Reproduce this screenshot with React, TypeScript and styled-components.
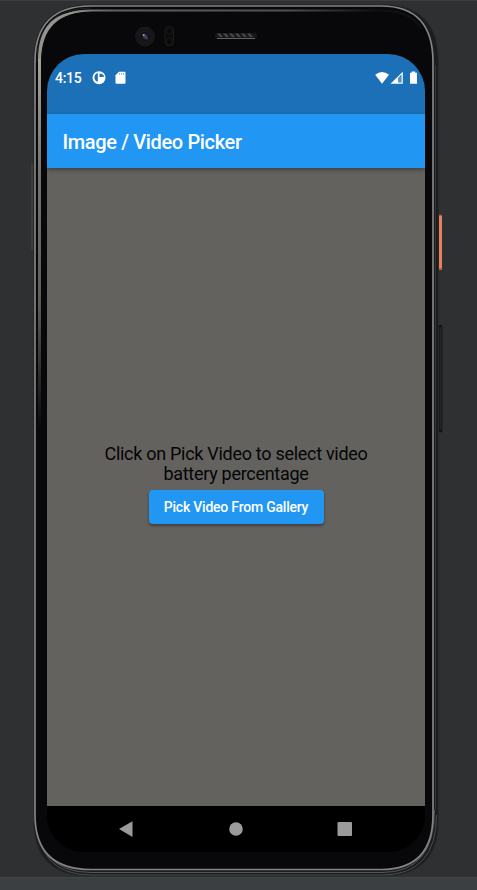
import React from "react";
import styled, { createGlobalStyle } from "styled-components";

const GlobalStyle = createGlobalStyle`
  * { box-sizing: border-box; }
  body { margin: 0; background: #2e3032; font-family: Roboto, "Noto Sans", sans-serif; }
`;

const Desktop = styled.main`
  position: relative;
  width: 477px;
  height: 890px;
  overflow: hidden;
  padding: 54px 52px 0 47px;
  background: linear-gradient(#3a3e41 0 1px, #2e3032 1px 877px, #424548 877px 878px, #3b3f42 878px);
`;

const DeviceArt = styled.svg`
  position: absolute;
  inset: 0;
`;

const Screen = styled.section`
  position: relative;
  display: flex;
  flex-direction: column;
  width: 378px;
  height: 798px;
  overflow: hidden;
  border-radius: 37px;
  background: #000;
`;

const StatusBar = styled.header`
  display: flex;
  justify-content: space-between;
  height: 60px;
  padding: 14px 7px 0 8px;
  background: #1b70b7;
  color: #fff;
`;

const StatusGroup = styled.div<{ $gap: number }>`
  display: flex;
  align-items: center;
  gap: ${(p) => p.$gap}px;
  height: 20px;
`;

const Clock = styled.span`
  width: 28px;
  font-size: 14px;
  font-weight: 500;
  line-height: 22px;
  letter-spacing: -0.3px;
  white-space: nowrap;
`;

const AppBar = styled.div`
  position: relative;
  height: 54px;
  padding-left: 15.5px;
  background: #2196f3;
  box-shadow: 0 2px 4px rgba(0, 0, 0, 0.35);
`;

const Title = styled.h1`
  margin: 0;
  color: #fff;
  font-size: 20px;
  font-weight: 500;
  line-height: 56px;
  letter-spacing: -0.36px;
`;

const Content = styled.div`
  display: flex;
  flex-direction: column;
  align-items: center;
  height: 638px;
  padding-top: 276px;
  background: #63625f;
`;

const Message = styled.p`
  width: 290px;
  margin: 0 0 6px;
  color: #050505;
  font-size: 18px;
  line-height: 20px;
  letter-spacing: -0.29px;
  text-align: center;
`;

const PickButton = styled.button`
  width: 175px;
  height: 34px;
  padding: 0;
  border: 0;
  border-radius: 4px;
  background: #2196f3;
  box-shadow: 0 2px 3px rgba(0, 0, 0, 0.38);
  color: #fff;
  font: 500 14px/34px Roboto, sans-serif;
  letter-spacing: -0.22px;
`;

const NavBar = styled.nav`
  display: flex;
  align-items: center;
  justify-content: space-between;
  height: 46px;
  padding: 0 72px 0 71px;
  background: #000;
`;

const speakerSlots = [217, 223, 229, 235, 241, 247];

function Device() {
  return (
    <DeviceArt width="477" height="890" viewBox="0 0 477 890" aria-hidden="true">
      <defs>
        <linearGradient id="topRim" x1="0" x2="1" y1="0" y2="0">
          <stop offset="0" stopColor="#a2a29f" />
          <stop offset="0.2" stopColor="#606060" />
          <stop offset="0.65" stopColor="#505050" />
          <stop offset="0.88" stopColor="#111" />
        </linearGradient>
        <linearGradient id="leftRim" gradientUnits="userSpaceOnUse" x1="0" x2="0" y1="60" y2="430">
          <stop offset="0" stopColor="#a2a29f" />
          <stop offset="0.3" stopColor="#73736f" />
          <stop offset="0.65" stopColor="#5d5d58" />
          <stop offset="1" stopColor="#08080a" />
        </linearGradient>
        <radialGradient id="lens">
          <stop offset="0" stopColor="#55556d" />
          <stop offset="0.35" stopColor="#242431" />
          <stop offset="0.6" stopColor="#111113" />
          <stop offset="1" stopColor="#1b1b1d" />
        </radialGradient>
      </defs>
      <path d="M33.5 62Q33.5 4.5 91 4.5H383Q438.5 4.5 438.5 62V820Q438.5 876 383 876H89Q33.5 876 33.5 820Z" fill="#1c1d1e" stroke="#27292a" />
      <path d="M36.5 815Q36.5 875 91 875H382Q436.5 875 436.5 815" fill="none" stroke="#4c4c4c" strokeWidth="1" />
      <path d="M35.5 810Q36 872.5 91 872.5H382Q434.5 872.5 434.5 810" fill="none" stroke="#555" strokeWidth="1" />
      <path d="M35 62Q35 6 91 6H381Q433 6 433 62V815Q433 869.5 381 869.5H91Q35 869.5 35 815Z" fill="#08080a" stroke="#838383" strokeWidth="1.7" />
      <path d="M435.5 65V810" stroke="#343536" strokeWidth="1" />
      <path d="M36.8 62Q36.8 8 91 8" fill="none" stroke="#202020" strokeWidth="1" />
      <path d="M39.5 61Q40 10.5 91 10.5H382Q408 10.5 421 27" fill="none" stroke="url(#topRim)" strokeWidth="2" />
      <path d="M41 60Q42 12 91 11.5Q38 7 38 60Z" fill="#93938f" />
      <path d="M38 59H41V430H38Z" fill="url(#leftRim)" />
      <path d="M32 164V250" stroke="#4a4b4c" />
      <rect x="439" y="215" width="3" height="55" rx="1" fill="#ec7e60" />
      <path d="M439 215h3m-3 54h3" stroke="#944632" />
      <rect x="439.5" y="326" width="2.5" height="106" rx="1" fill="#222324" stroke="#161718" strokeWidth="0.8" />
      <path d="M439 325h3v2h-3zm0 105h3v2h-3z" fill="#101112" />
      <circle cx="145" cy="36.5" r="10" fill="#171719" />
      <circle cx="145" cy="36.5" r="6" fill="url(#lens)" />
      <circle cx="143.7" cy="35" r="1" fill="#a4a4ad" />
      <circle cx="146.5" cy="38" r="1.5" fill="#3b3b63" />
      <rect x="165" y="26.5" width="8.5" height="19.5" rx="4" fill="#0c0c0d" stroke="#1b1b1b" />
      <circle cx="169.3" cy="31" r="2.7" fill="#080808" stroke="#171717" />
      <circle cx="169.3" cy="41.5" r="3" fill="#080808" stroke="#1a1a1a" />
      <rect x="215" y="33" width="42" height="5" rx="2" fill="#171717" />
      {speakerSlots.map((x) => (
        <path key={x} d={`M${x} 33.5h3l3 3.5h-3z`} fill="#484848" />
      ))}
      <path d="M217 38.5H255" stroke="#626262" />
    </DeviceArt>
  );
}

export default function App() {
  return (
    <>
      <GlobalStyle />
      <Desktop>
        <Device />
        <Screen>
          <StatusBar>
            <StatusGroup $gap={8.5}>
              <Clock>4:15</Clock>
              <svg width="15" height="14" viewBox="0 0 15 14">
                <circle cx="7" cy="6.7" r="6.5" fill="#fff" />
                <path d="M5.8 2.1V10.8Q2.6 10 2.5 6.5Q2.8 3 5.8 2.1Z" fill="#1b70b7" />
                <path d="M7.5 2.7h3.1v3.4H7.5zM10.8 4h1v2h-1z" fill="#1b70b7" />
              </svg>
              <svg width="11" height="14" viewBox="0 0 11 14">
                <path d="M4 .8h5.5q1 0 1 1v10q0 1-1 1h-8q-1 0-1-1V4.3z" fill="#fff" />
                <path d="M4.2 2.2h.7v1.4h-.7zm2 0h.7v1.4h-.7zm2 0h.7v1.4h-.7z" fill="#1b70b7" />
              </svg>
            </StatusGroup>
            <StatusGroup $gap={1}>
              <svg width="15" height="14" viewBox="0 0 15 14">
                <path d="M1.2 3.8Q8-1.8 15 3.8L8 12.8Z" fill="#fff" />
              </svg>
              <svg width="13" height="14" viewBox="0 0 13 14">
                <path d="M.5 12.8L12.8.7V12.8Z" fill="#fff" />
                <path d="M8.3 6.7l3.2-3.2V11.5H8.3z" fill="#1b70b7" />
                <path d="M10 5.5v6" stroke="#fff" strokeWidth=".5" />
              </svg>
              <svg width="14" height="14" viewBox="0 0 14 14">
                <path d="M6 1.7h1.7V.5h3.6v1.2H13v11H6z" fill="#fff" />
              </svg>
            </StatusGroup>
          </StatusBar>
          <AppBar>
            <Title>Image / Video Picker</Title>
          </AppBar>
          <Content>
            <Message>
              Click on Pick Video to select video
              <br />
              battery percentage
            </Message>
            <PickButton>Pick Video From Gallery</PickButton>
          </Content>
          <NavBar>
            <svg width="16" height="18" viewBox="0 0 16 18">
              <path d="M1 9L14.5 1.2V17Z" fill="#9b9b9b" />
            </svg>
            <svg width="16" height="16" viewBox="0 0 16 16">
              <circle cx="8" cy="8" r="6.8" fill="#9b9b9b" />
            </svg>
            <svg width="16" height="16" viewBox="0 0 16 16">
              <rect x="0.5" y="1" width="14.5" height="14" rx="1" fill="#9b9b9b" />
            </svg>
          </NavBar>
        </Screen>
      </Desktop>
    </>
  );
}
